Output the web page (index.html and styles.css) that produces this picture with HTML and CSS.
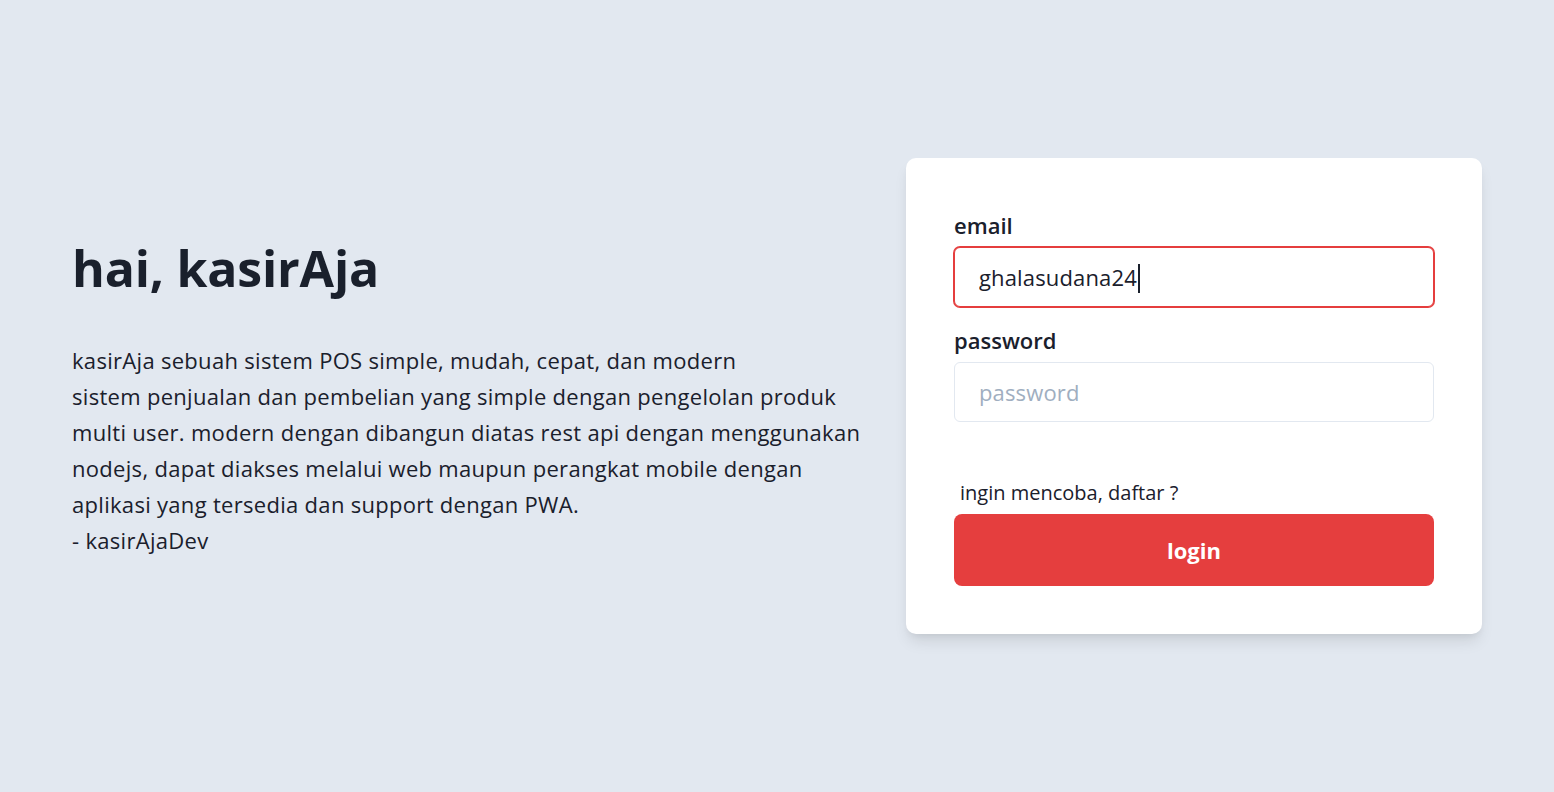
FILE: index.html
```html
<!DOCTYPE html>
<html lang="id">
<head>
  <meta charset="UTF-8" />
  <title>kasirAja – Login</title>
  <link rel="stylesheet" href="styles.css">
</head>
<body>

<div class="page">
  <div class="intro">
    <h1>hai, kasirAja</h1>
    <p>
      kasirAja sebuah sistem POS simple, mudah, cepat, dan modern<br>
      sistem penjualan dan pembelian yang simple dengan pengelolan produk multi user. modern dengan dibangun diatas rest api dengan menggunakan nodejs, dapat diakses melalui web maupun perangkat mobile dengan aplikasi yang tersedia dan support dengan PWA.<br>
      - kasirAjaDev
    </p>
  </div>

  <form class="card" id="loginForm">
    <div class="field">
      <label for="email">email</label>
      <div class="input-wrap">
        <input type="text" id="email" class="focused" value="ghalasudana24" />
        <span class="caret"></span>
      </div>
    </div>
    <div class="field">
      <label for="password">password</label>
      <input type="password" id="password" placeholder="password" />
    </div>
    <a class="register" href="#">ingin mencoba, daftar ?</a>
    <button type="submit" class="submit-btn">login</button>
  </form>
</div>

<script>
  document.getElementById("loginForm").addEventListener("submit", (e) => {
    e.preventDefault();
  });
</script>

</body>
</html>
```

FILE: styles.css
```css
* {
  box-sizing: border-box;
}
body {
  margin: 0;
  font-family: "Open Sans", "Noto Sans", sans-serif;
  background: #e2e8f0;
  color: #1a202c;
}
.page {
  min-height: 792px;
  padding: 0 72px;
  display: flex;
  align-items: center;
  gap: 36px;
}
.intro {
  flex: 1;
  padding-top: 4px;
}
.intro h1 {
  margin: 0 0 44px;
  font-size: 50px;
  font-weight: 700;
  line-height: 1.2;
  letter-spacing: -0.2px;
}
.intro p {
  margin: 0;
  font-size: 22px;
  line-height: 36px;
  letter-spacing: 0.3px;
  max-width: 800px;
}
.card {
  width: 576px;
  background: white;
  border-radius: 10px;
  padding: 51px 48px 48px;
  box-shadow: 0 10px 15px -3px rgba(0,0,0,0.1), 0 4px 6px -2px rgba(0,0,0,0.05);
  display: flex;
  flex-direction: column;
}
.field {
  display: flex;
  flex-direction: column;
  margin-bottom: 17px;
}
.field label {
  font-size: 22px;
  font-weight: 600;
  line-height: 32px;
  margin-bottom: 6px;
}
.input-wrap {
  position: relative;
  display: flex;
  flex-direction: column;
}
.field input {
  height: 60px;
  padding: 0 24px;
  font-family: inherit;
  font-size: 22px;
  letter-spacing: 0.15px;
  color: #1a202c;
  border: 1px solid #e2e8f0;
  border-radius: 6px;
  outline: none;
}
.field input::placeholder {
  color: #a0aec0;
}
.field input.focused,
.field input:focus {
  border-color: #e53e3e;
  box-shadow: 0 0 0 1px #e53e3e;
}
.caret {
  position: absolute;
  left: 184px;
  top: 17px;
  width: 2px;
  height: 29px;
  background: #1a202c;
}
.register {
  margin: 40px 0 7px 6px;
  font-size: 20px;
  line-height: 28px;
  color: #1a202c;
  text-decoration: none;
}
.submit-btn {
  height: 72px;
  border: none;
  border-radius: 8px;
  background: #e53e3e;
  color: white;
  font-family: inherit;
  font-size: 22px;
  font-weight: 700;
  cursor: pointer;
}
```
